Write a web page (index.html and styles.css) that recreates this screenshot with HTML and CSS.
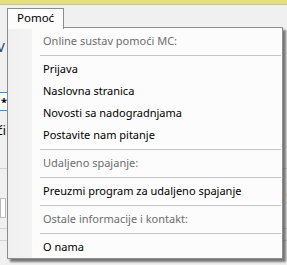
FILE: index.html
```html
<!DOCTYPE html>
<html lang="hr">
<head>
    <meta charset="UTF-8">
    <title>Pomoć</title>
    <link rel="stylesheet" href="styles.css">
</head>
<body>
    <div class="topbar"></div>

    <div class="app">
        <div class="row row-title"><span class="cut-left title-char">V</span></div>
        <div class="row row-input"><div class="field">*</div></div>
        <div class="row row-text"><span class="cut-left">ći</span></div>
        <div class="row row-line"></div>
        <div class="row row-paren"><span></span><span class="right-text">(6</span></div>
        <div class="row row-boxes">
            <div class="box"></div><div class="box"></div>
        </div>
        <div class="row row-line low"></div>
        <div class="row row-line lower"></div>
    </div>

    <div class="menu-wrap">
        <div class="menu-tab">Pomoć</div>
        <div class="menu">
            <div class="menu-head">Online sustav pomoći MC:</div>
            <div class="sep"></div>
            <div class="menu-item">Prijava</div>
            <div class="menu-item">Naslovna stranica</div>
            <div class="menu-item">Novosti sa nadogradnjama</div>
            <div class="menu-item">Postavite nam pitanje</div>
            <div class="sep"></div>
            <div class="menu-head">Udaljeno spajanje:</div>
            <div class="sep"></div>
            <div class="menu-item">Preuzmi program za udaljeno spajanje</div>
            <div class="sep"></div>
            <div class="menu-head">Ostale informacije i kontakt:</div>
            <div class="sep"></div>
            <div class="menu-item">O nama</div>
        </div>
    </div>
</body>
</html>
```

FILE: styles.css
```css
* {
    margin: 0;
    padding: 0;
    box-sizing: border-box;
}

body {
    width: 287px;
    height: 265px;
    overflow: hidden;
    background-color: #f0f0f0;
    font-family: "Noto Sans", "Open Sans", Arial, sans-serif;
    font-size: 11px;
    color: #000;
    position: relative;
}

.topbar {
    height: 5px;
    background-color: #e6de7c;
    border-bottom: 1px solid #cfc56a;
}

/* window content behind the dropdown */
.app {
    display: flex;
    flex-direction: column;
}

.row {
    display: flex;
    justify-content: space-between;
}

.row-title {
    margin-top: 33px;
    height: 16px;
}

.title-char {
    color: #1d3562;
    font-size: 13px;
    margin-left: -2px;
}

.row-input {
    margin-top: 38px;
}

.field {
    width: 40px;
    height: 19px;
    background-color: #fff;
    border-top: 1px solid #3c8fdc;
    border-bottom: 1px solid #3c8fdc;
    padding-left: 1px;
    line-height: 17px;
    font-weight: bold;
}

.row-text {
    margin-top: 11px;
    height: 16px;
    font-size: 12px;
}

.cut-left {
    margin-left: -3px;
}

.row-line {
    margin-top: 30px;
    height: 1px;
    background-color: #d4d4d4;
}

.row-paren {
    margin-top: 17px;
    height: 14px;
    font-size: 12px;
    color: #1d3562;
}

.right-text {
    margin-right: -10px;
}

.row-boxes {
    margin-top: -2px;
    justify-content: flex-start;
    gap: 1px;
}

.box {
    width: 6px;
    height: 20px;
    background-color: #fff;
    border: 1px solid #b9b9b9;
}

.row-line.low {
    margin-top: 10px;
}

.row-line.lower {
    margin-top: 11px;
}

/* dropdown menu */
.menu-wrap {
    position: absolute;
    left: 7px;
    top: 8px;
}

.menu-tab {
    display: inline-block;
    position: relative;
    z-index: 2;
    width: 57px;
    height: 21px;
    padding-left: 9px;
    line-height: 18px;
    font-size: 11.5px;
    background-color: #fcfcfc;
    border: 1px solid #8c8c8c;
    border-bottom: none;
    margin-bottom: -2px;
}

.menu {
    width: 276px;
    padding-top: 2px;
    border: 1px solid #8c8c8c;
    background: linear-gradient(to right, #f0f0f0 0, #f3f3f3 24px, #fcfcfc 24px);
    box-shadow: 3px 3px 2px rgba(0, 0, 0, 0.5);
}

.menu-head,
.menu-item {
    height: 22px;
    line-height: 22px;
    padding-left: 35px;
    white-space: nowrap;
}

.menu-head {
    color: #6d6d6d;
}

.sep {
    height: 6px;
    margin-left: 32px;
    margin-right: 1px;
    display: flex;
    align-items: center;
}

.sep::after {
    content: "";
    flex: 1;
    height: 1px;
    background-color: #c5c5c5;
}
```
